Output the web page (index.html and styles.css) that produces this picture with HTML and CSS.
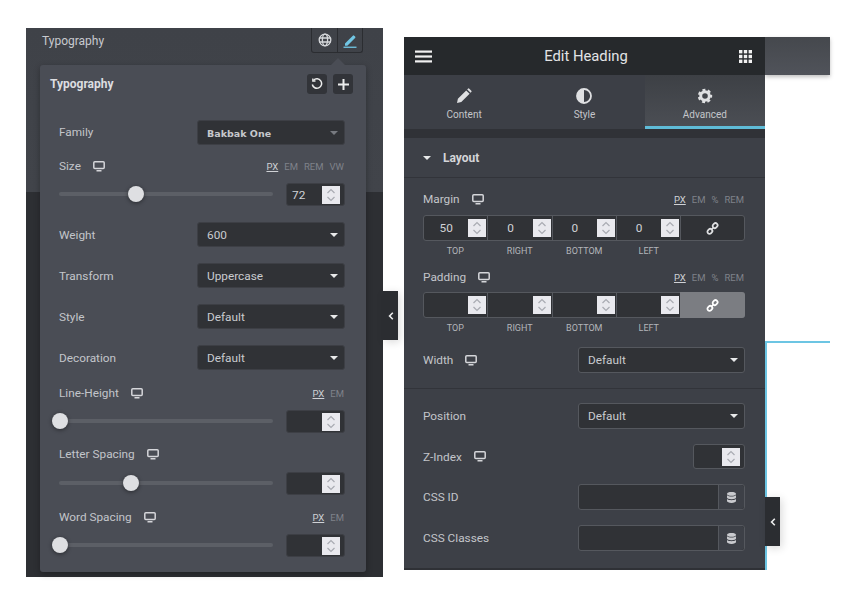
FILE: index.html
```html
<!DOCTYPE html>
<html lang="en">
<head>
<meta charset="utf-8">
<title>Typography and Edit Heading</title>
<link rel="stylesheet" href="styles.css">
</head>
<body>
<svg class="defs" width="0" height="0" aria-hidden="true">
  <symbol id="monitor" viewBox="0 0 12 11"><rect x="0.8" y="0.8" width="10.4" height="6.7" rx="1" fill="none" stroke="currentColor" stroke-width="1.5"/><rect x="3.5" y="9" width="5" height="1.5" fill="currentColor"/></symbol>
  <symbol id="spin" viewBox="0 0 18 18"><path d="M5.5 7 9 3.5 12.5 7M5.5 11 9 14.5 12.5 11" fill="none" stroke="#a9abb2" stroke-width="1.2"/></symbol>
  <symbol id="caret" viewBox="0 0 10 5"><path d="M0 0h10L5 5z" fill="currentColor"/></symbol>
  <symbol id="link" viewBox="0 0 14 14"><g fill="none" stroke="currentColor" stroke-width="1.9"><rect x="7" y="1.7" width="5.6" height="4.4" rx="2.1" transform="rotate(-45 9.8 3.9)"/><rect x="1.4" y="7.9" width="5.6" height="4.4" rx="2.1" transform="rotate(-45 4.2 10.1)"/></g><path d="M5.5 8.5 8.5 5.5" stroke="currentColor" stroke-width="1.5"/></symbol>
  <symbol id="db" viewBox="0 0 10 12"><path d="M0 2C0 .6 2.2 0 5 0s5 .6 5 2-2.2 2-5 2-5-.6-5-2zM0 3.6C1 4.7 3 5 5 5s4-.3 5-1.400V6c0 1.200-2.200 1.900-5 1.900S0 7.200 0 6zM0 7.700C1 8.700 3 9 5 9s4-.3 5-1.300V10c0 1.300-2.200 2-5 2s-5-.7-5-2z" fill="currentColor"/></symbol>
</svg>

<main class="page">
  <section class="typo-panel">
    <div class="typo-bar">
      <span>Typography</span>
      <div class="switch">
        <span class="switch-btn"><svg width="14" height="14" viewBox="0 0 14 14" fill="none" stroke="currentColor" stroke-width="1.3"><circle cx="7" cy="7" r="5.8"/><ellipse cx="7" cy="7" rx="2.600" ry="5.800"/><path d="M1.200 5h11.600M1.200 9h11.600"/></svg></span>
        <span class="switch-btn switch-active"><svg width="14" height="15" viewBox="0 0 14 15"><path d="M2 10.500 9.800 2.700a1 1 0 0 1 1.400 0l.9.9a1 1 0 0 1 0 1.400L4.300 12.800H2z" fill="currentColor"/><rect x="0.500" y="13.600" width="13" height="1.300" fill="currentColor"/></svg></span>
      </div>
    </div>

    <div class="popover">
      <span class="notch"></span>
      <header class="pop-head">
        <strong>Typography</strong>
        <div class="pop-actions">
          <span class="pop-btn"><svg width="12" height="12" viewBox="0 0 12 12" fill="none" stroke="currentColor" stroke-width="1.500"><path d="M2.500 2.300A4.700 4.700 0 1 1 1.300 6.500"/><path d="M1.800 .5v2.500h2.700" stroke-width="1.300"/></svg></span>
          <span class="pop-btn"><svg width="11" height="11" viewBox="0 0 11 11" fill="currentColor"><path d="M4.500 0h2v4.500H11v2H6.500V11h-2V6.500H0v-2h4.500z"/></svg></span>
        </div>
      </header>

      <div class="pop-body">
        <div class="row row-family">
          <label>Family</label>
          <div class="select select-left select-muted"><span class="font-sample">Bakbak One</span><svg class="caret"><use href="#caret"/></svg></div>
        </div>

        <div class="row-label gap-13">
          <label>Size</label><svg class="device" width="12" height="11"><use href="#monitor"/></svg>
          <div class="units"><u>PX</u><span>EM</span><span>REM</span><span>VW</span></div>
        </div>
        <div class="row-slider">
          <div class="track"><span class="knob" style="left:77px"></span></div>
          <div class="number"><span>72</span><svg class="spin" width="18" height="18"><use href="#spin"/></svg></div>
        </div>

        <div class="row gap-16">
          <label>Weight</label>
          <div class="select select-left"><span>600</span><svg class="caret"><use href="#caret"/></svg></div>
        </div>
        <div class="row gap-16">
          <label>Transform</label>
          <div class="select select-left"><span>Uppercase</span><svg class="caret"><use href="#caret"/></svg></div>
        </div>
        <div class="row gap-16">
          <label>Style</label>
          <div class="select select-left"><span>Default</span><svg class="caret"><use href="#caret"/></svg></div>
        </div>
        <div class="row gap-16">
          <label>Decoration</label>
          <div class="select select-left"><span>Default</span><svg class="caret"><use href="#caret"/></svg></div>
        </div>

        <div class="row-label gap-15">
          <label>Line-Height</label><svg class="device" width="12" height="11"><use href="#monitor"/></svg>
          <div class="units"><u>PX</u><span>EM</span></div>
        </div>
        <div class="row-slider">
          <div class="track"><span class="knob" style="left:1px"></span></div>
          <div class="number"><span></span><svg class="spin" width="18" height="18"><use href="#spin"/></svg></div>
        </div>

        <div class="row-label gap-13">
          <label>Letter Spacing</label><svg class="device" width="12" height="11"><use href="#monitor"/></svg>
        </div>
        <div class="row-slider gap-10">
          <div class="track"><span class="knob" style="left:72px"></span></div>
          <div class="number"><span></span><svg class="spin" width="18" height="18"><use href="#spin"/></svg></div>
        </div>

        <div class="row-label gap-14">
          <label>Word Spacing</label><svg class="device" width="12" height="11"><use href="#monitor"/></svg>
          <div class="units"><u>PX</u><span>EM</span></div>
        </div>
        <div class="row-slider">
          <div class="track"><span class="knob" style="left:1px"></span></div>
          <div class="number"><span></span><svg class="spin" width="18" height="18"><use href="#spin"/></svg></div>
        </div>
      </div>
    </div>
    <span class="toggle toggle-left"><svg width="6" height="8" viewBox="0 0 6 8"><path d="M4.800 .8 1.600 4l3.200 3.200" fill="none" stroke="currentColor" stroke-width="1.600"/></svg></span>
  </section>

  <section class="edit-panel">
    <header class="edit-head">
      <svg width="18" height="13" viewBox="0 0 18 13" fill="currentColor"><rect width="17" height="2.200" y=".5"/><rect width="17" height="2.200" y="5.400"/><rect width="17" height="2.200" y="10.300"/></svg>
      <h1>Edit Heading</h1>
      <svg width="13" height="13" viewBox="0 0 13 13" fill="currentColor"><rect width="3.400" height="3.400"/><rect x="4.800" width="3.400" height="3.400"/><rect x="9.600" width="3.400" height="3.400"/><rect y="4.800" width="3.400" height="3.400"/><rect x="4.800" y="4.800" width="3.400" height="3.400"/><rect x="9.600" y="4.800" width="3.400" height="3.400"/><rect y="9.600" width="3.400" height="3.400"/><rect x="4.800" y="9.600" width="3.400" height="3.400"/><rect x="9.600" y="9.600" width="3.400" height="3.400"/></svg>
    </header>
    <nav class="tabs">
      <div class="tab">
        <svg width="16" height="16" viewBox="0 0 16 16" fill="currentColor"><path d="M1 15l.9-4.300 8.300-8.300 3.400 3.400-8.300 8.300zM11.200 1.400l.7-.7a1 1 0 0 1 1.400 0l2 2a1 1 0 0 1 0 1.400l-.7.700z"/></svg>
        <span>Content</span>
      </div>
      <div class="tab">
        <svg width="16" height="16" viewBox="0 0 16 16"><circle cx="8" cy="8" r="7" fill="none" stroke="currentColor" stroke-width="1.800"/><path d="M8 1a7 7 0 0 0 0 14z" fill="currentColor"/></svg>
        <span>Style</span>
      </div>
      <div class="tab tab-active">
        <svg width="16" height="16" viewBox="0 0 16 16"><circle cx="8" cy="8" r="4.300" fill="none" stroke="currentColor" stroke-width="3"/><circle cx="8" cy="8" r="6" fill="none" stroke="currentColor" stroke-width="2.400" stroke-dasharray="2.900 2.380" stroke-dashoffset="1.400"/></svg>
        <span>Advanced</span>
      </div>
    </nav>
    <div class="strip"></div>
    <div class="section-head"><svg class="caret"><use href="#caret"/></svg><strong>Layout</strong></div>

    <div class="edit-body">
      <div class="row-label">
        <label>Margin</label><svg class="device" width="12" height="11"><use href="#monitor"/></svg>
        <div class="units"><u>PX</u><span>EM</span><span>%</span><span>REM</span></div>
      </div>
      <div class="dims">
        <div class="dim"><span>50</span><svg class="spin" width="18" height="18"><use href="#spin"/></svg></div>
        <div class="dim"><span>0</span><svg class="spin" width="18" height="18"><use href="#spin"/></svg></div>
        <div class="dim"><span>0</span><svg class="spin" width="18" height="18"><use href="#spin"/></svg></div>
        <div class="dim"><span>0</span><svg class="spin" width="18" height="18"><use href="#spin"/></svg></div>
        <div class="dim-link"><svg width="13" height="13"><use href="#link"/></svg></div>
      </div>
      <div class="dim-labels"><span>TOP</span><span>RIGHT</span><span>BOTTOM</span><span>LEFT</span></div>

      <div class="row-label gap-12">
        <label>Padding</label><svg class="device" width="12" height="11"><use href="#monitor"/></svg>
        <div class="units"><u>PX</u><span>EM</span><span>%</span><span>REM</span></div>
      </div>
      <div class="dims dims-tight">
        <div class="dim"><span></span><svg class="spin" width="18" height="18"><use href="#spin"/></svg></div>
        <div class="dim"><span></span><svg class="spin" width="18" height="18"><use href="#spin"/></svg></div>
        <div class="dim"><span></span><svg class="spin" width="18" height="18"><use href="#spin"/></svg></div>
        <div class="dim"><span></span><svg class="spin" width="18" height="18"><use href="#spin"/></svg></div>
        <div class="dim-link dim-link-on"><svg width="13" height="13"><use href="#link"/></svg></div>
      </div>
      <div class="dim-labels"><span>TOP</span><span>RIGHT</span><span>BOTTOM</span><span>LEFT</span></div>

      <div class="row row-tall gap-13">
        <div class="label-group"><label>Width</label><svg class="device" width="12" height="11"><use href="#monitor"/></svg></div>
        <div class="select select-right"><span>Default</span><svg class="caret"><use href="#caret"/></svg></div>
      </div>
    </div>

    <div class="edit-body edit-body-last">
      <div class="row row-tall">
        <label>Position</label>
        <div class="select select-right"><span>Default</span><svg class="caret"><use href="#caret"/></svg></div>
      </div>
      <div class="row gap-15">
        <div class="label-group"><label>Z-Index</label><svg class="device" width="12" height="11"><use href="#monitor"/></svg></div>
        <div class="number number-wide"><span></span><svg class="spin" width="18" height="18"><use href="#spin"/></svg></div>
      </div>
      <div class="row row-tall gap-15">
        <label>CSS ID</label>
        <div class="text-input"><span></span><i><svg width="9" height="11"><use href="#db"/></svg></i></div>
      </div>
      <div class="row row-tall gap-15">
        <label>CSS Classes</label>
        <div class="text-input"><span></span><i><svg width="9" height="11"><use href="#db"/></svg></i></div>
      </div>
    </div>
    <span class="toggle toggle-right"><svg width="6" height="8" viewBox="0 0 6 8"><path d="M4.800 .8 1.600 4l3.200 3.200" fill="none" stroke="currentColor" stroke-width="1.600"/></svg></span>
  </section>

  <aside class="canvas">
    <div class="canvas-bar"></div>
    <div class="canvas-selected"></div>
  </aside>
</main>
</body>
</html>
```

FILE: styles.css
```css
* { box-sizing: border-box; }
html, body { margin: 0; height: 605px; overflow: hidden; background: #fff; }
body { font-family: Roboto, "Liberation Sans", sans-serif; font-size: 11.800px; color: #c3c5ca; }
.defs { position: absolute; }
label { display: block; }
.page { display: flex; align-items: flex-start; padding-left: 26px; }

/* left panel */
.typo-panel {
  position: relative; z-index: 1; width: 357px; height: 549px; margin-top: 28px; padding-left: 14px;
  background: linear-gradient(#3f4248 0, #41444a 164px, #2d2f33 164px);
}
.typo-bar { display: flex; justify-content: space-between; height: 25px; padding: 0 20px 0 2px; margin-bottom: 12px; align-items: center; font-size: 12px; color: #c8cacf; }
.switch { display: flex; height: 25px; border: 1px solid #2b2d31; border-top: 0; border-radius: 0 0 3px 3px; }
.switch-btn { display: flex; width: 25px; align-items: center; justify-content: center; color: #d5d7da; }
.switch-btn + .switch-btn { border-left: 1px solid #2b2d31; }
.switch-active { color: #71c6e4; }
.popover { position: relative; width: 326px; height: 507px; background: #4a4d55; border-radius: 3px; box-shadow: 0 2px 6px rgba(0,0,0,.3); }
.notch { position: absolute; top: -7px; left: 291px; width: 0; height: 0; border: 7px solid transparent; border-top: 0; border-bottom-color: #4a4d55; }
.pop-head { display: flex; height: 38px; align-items: center; justify-content: space-between; padding: 0 13px 0 10px; color: #dcdde0; }
.pop-head strong { font-size: 12px; font-weight: 700; }
.pop-actions { display: flex; gap: 6px; }
.pop-btn { display: flex; width: 20px; height: 20px; align-items: center; justify-content: center; background: #323439; border-radius: 3px; color: #eceded; }
.pop-body { padding: 17px 21px 15px 19px; }

.row { display: flex; align-items: center; justify-content: space-between; height: 25px; }
.row > label { padding-top: 1px; }
.row-family > label, .row-tall > label { padding-top: 0; margin-top: -1px; }
.row-tall { height: 26px; }
.row-tall .select { padding-top: 0; }
.row-label { display: flex; align-items: center; height: 16px; }
.row-slider { display: flex; align-items: center; justify-content: space-between; height: 23px; margin-top: 9px; }
.gap-10 { margin-top: 10px; }
.gap-12 { margin-top: 12px; }
.gap-13 { margin-top: 13px; }
.gap-14 { margin-top: 14px; }
.gap-15 { margin-top: 15px; }
.gap-16 { margin-top: 16px; }
.device { margin-left: 12px; color: #d5d6da; flex: none; }
.label-group { display: flex; align-items: center; }
.units { display: flex; gap: 6px; margin-left: auto; margin-right: 1px; font-size: 9.500px; color: #7f828a; }
.units u { color: #d0d2d6; }

.select { display: flex; align-items: center; justify-content: space-between; height: 100%; padding: 1px 6px 0 9px; background: #303236; border: 1px solid #3d3f45; border-radius: 3px; color: #c9cbcf; }
.select-left { width: 148px; }
.select-right { width: 167px; border-color: #55585e; }
.select-muted .caret { color: #777a80; }
.caret { width: 8px; height: 4px; color: #e8e9ea; flex: none; }
.font-sample { font-family: "DejaVu Sans", sans-serif; font-weight: 700; font-size: 9.500px; color: #c6c8cc; }

.track { position: relative; width: 214px; height: 4px; margin-top: -1px; background: #5c5f66; border-radius: 2px; }
.knob { position: absolute; top: -6px; width: 16px; height: 16px; margin-left: -8px; background: #dedfe2; border-radius: 50%; box-shadow: 0 1px 4px rgba(0,0,0,.45); }

.number { display: flex; align-items: center; justify-content: space-between; width: 59px; height: 23px; padding: 0 4px 0 5px; background: #303236; border: 1px solid #3d3f45; border-radius: 3px; color: #d0d2d6; }
.number-wide { width: 52px; height: 25px; border-color: #55585e; }
.spin { background: #e9e9ee; flex: none; }

/* right panel */
.edit-panel { position: relative; width: 361px; height: 533px; margin: 37px 0 0 21px; background: #3d4047; border-bottom: 2px solid #2f3136; }
.edit-head { display: flex; align-items: center; justify-content: space-between; height: 38px; padding: 0 13px 0 11px; background: #26292c; color: #f1f1f1; }
.edit-head h1 { margin: 0; font-size: 14.800px; font-weight: 400; color: #e2e3e5; }
.tabs { display: flex; height: 54px; background: #3c3f46; }
.tab { flex: 1; display: flex; flex-direction: column; align-items: center; padding-top: 13px; gap: 5px; font-size: 10px; color: #c4c6ca; }
.tab svg { color: #dfe0e2; }
.tab-active { background: linear-gradient(#3d4045, #4b4e54); border-bottom: 3px solid #5fbcd8; }
.strip { height: 9px; background: #303237; }
.section-head { display: flex; align-items: center; gap: 12px; height: 40px; padding-left: 19px; border-bottom: 1px solid #32343a; color: #d4d5d8; }
.section-head strong { font-size: 12px; font-weight: 700; }
.edit-body { padding: 13px 20px 15px 19px; border-bottom: 1px solid #32343a; }
.edit-body-last { padding-top: 14px; border-bottom: 0; }

.dims { display: flex; height: 26px; margin-top: 8px; background: #303236; border: 1px solid #55585e; border-radius: 3px; }
.dims-tight { margin-top: 7px; }
.dim { display: flex; align-items: center; justify-content: space-between; width: 64.300px; padding-right: 1px; border-right: 1px solid #55585e; color: #d0d2d6; }
.dim span { flex: 1; text-align: center; }
.dim-link { flex: 1; display: flex; align-items: center; justify-content: center; color: #dfe0e2; }
.dim-link-on { margin: -1px; background: #7b7d82; color: #fff; border-radius: 0 3px 3px 0; }
.dim-labels { display: flex; height: 12px; margin-top: 4px; font-size: 9px; line-height: 12px; color: #b3b5ba; }
.dim-labels span { width: 64.500px; text-align: center; }

.text-input { display: flex; width: 167px; height: 100%; background: #303236; border: 1px solid #55585e; border-radius: 3px; }
.text-input span { flex: 1; }
.text-input i { display: flex; width: 26px; align-items: center; justify-content: center; background: #3d4047; border-left: 1px solid #55585e; color: #c9cace; border-radius: 0 3px 3px 0; }

.toggle { position: absolute; display: flex; align-items: center; justify-content: center; width: 15px; height: 49px; background: #2b2d31; color: #eceded; box-shadow: 2px 2px 8px rgba(0,0,0,.15); }
.toggle-left { top: 263px; left: 357px; }
.toggle-right { top: 460px; left: 361px; }

/* page behind the panel */
.canvas { width: 65px; margin-top: 37px; }
.canvas-bar { height: 38px; background: linear-gradient(#45484d, #50535a); box-shadow: 0 2px 4px rgba(0,0,0,.25); }
.canvas-selected { height: 229px; margin-top: 266px; border-top: 2px solid #6cc5e3; border-left: 2px solid #6cc5e3; }
```
